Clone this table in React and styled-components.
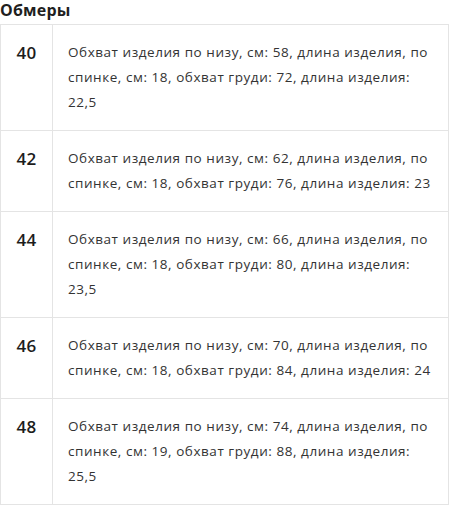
import React from "react";
import styled, { createGlobalStyle } from "styled-components";

const GlobalStyle = createGlobalStyle`
  body {
    margin: 0;
    background: #fff;
    font-family: "Open Sans", "Liberation Sans", sans-serif;
    color: #2b2b2b;
  }
`;

const Wrapper = styled.div`
  width: 449px;
`;

const Title = styled.h3`
  margin: 0;
  height: 24px;
  line-height: 20px;
  font-size: 16px;
  font-weight: 700;
  color: #1f1f1f;
  letter-spacing: 0.2px;
`;

const Table = styled.div`
  display: flex;
  flex-direction: column;
  border: 1px solid #e4e4e4;
  border-bottom: none;
`;

const Row = styled.div`
  display: grid;
  grid-template-columns: 52px 1fr;
  border-bottom: 1px solid #e4e4e4;
`;

const Size = styled.div`
  padding: 15px 0;
  text-align: center;
  font-size: 17px;
  font-weight: 600;
  line-height: 26px;
  letter-spacing: 0.3px;
  color: #1c1c1c;
  border-right: 1px solid #e4e4e4;
`;

const Description = styled.p`
  margin: 0;
  padding: 15px 14px 15px 15px;
  font-size: 13.5px;
  line-height: 25px;
  letter-spacing: 0.55px;
  color: #333;
`;

const rows = [
  { size: 40, text: "Обхват изделия по низу, см: 58, длина изделия, по спинке, см: 18, обхват груди: 72, длина изделия: 22,5" },
  { size: 42, text: "Обхват изделия по низу, см: 62, длина изделия, по спинке, см: 18, обхват груди: 76, длина изделия: 23" },
  { size: 44, text: "Обхват изделия по низу, см: 66, длина изделия, по спинке, см: 18, обхват груди: 80, длина изделия: 23,5" },
  { size: 46, text: "Обхват изделия по низу, см: 70, длина изделия, по спинке, см: 18, обхват груди: 84, длина изделия: 24" },
  { size: 48, text: "Обхват изделия по низу, см: 74, длина изделия, по спинке, см: 19, обхват груди: 88, длина изделия: 25,5" },
];

const App = () => (
  <Wrapper>
    <GlobalStyle />
    <Title>Обмеры</Title>
    <Table>
      {rows.map((row) => (
        <Row key={row.size}>
          <Size>{row.size}</Size>
          <Description>{row.text}</Description>
        </Row>
      ))}
    </Table>
  </Wrapper>
);

export default App;
